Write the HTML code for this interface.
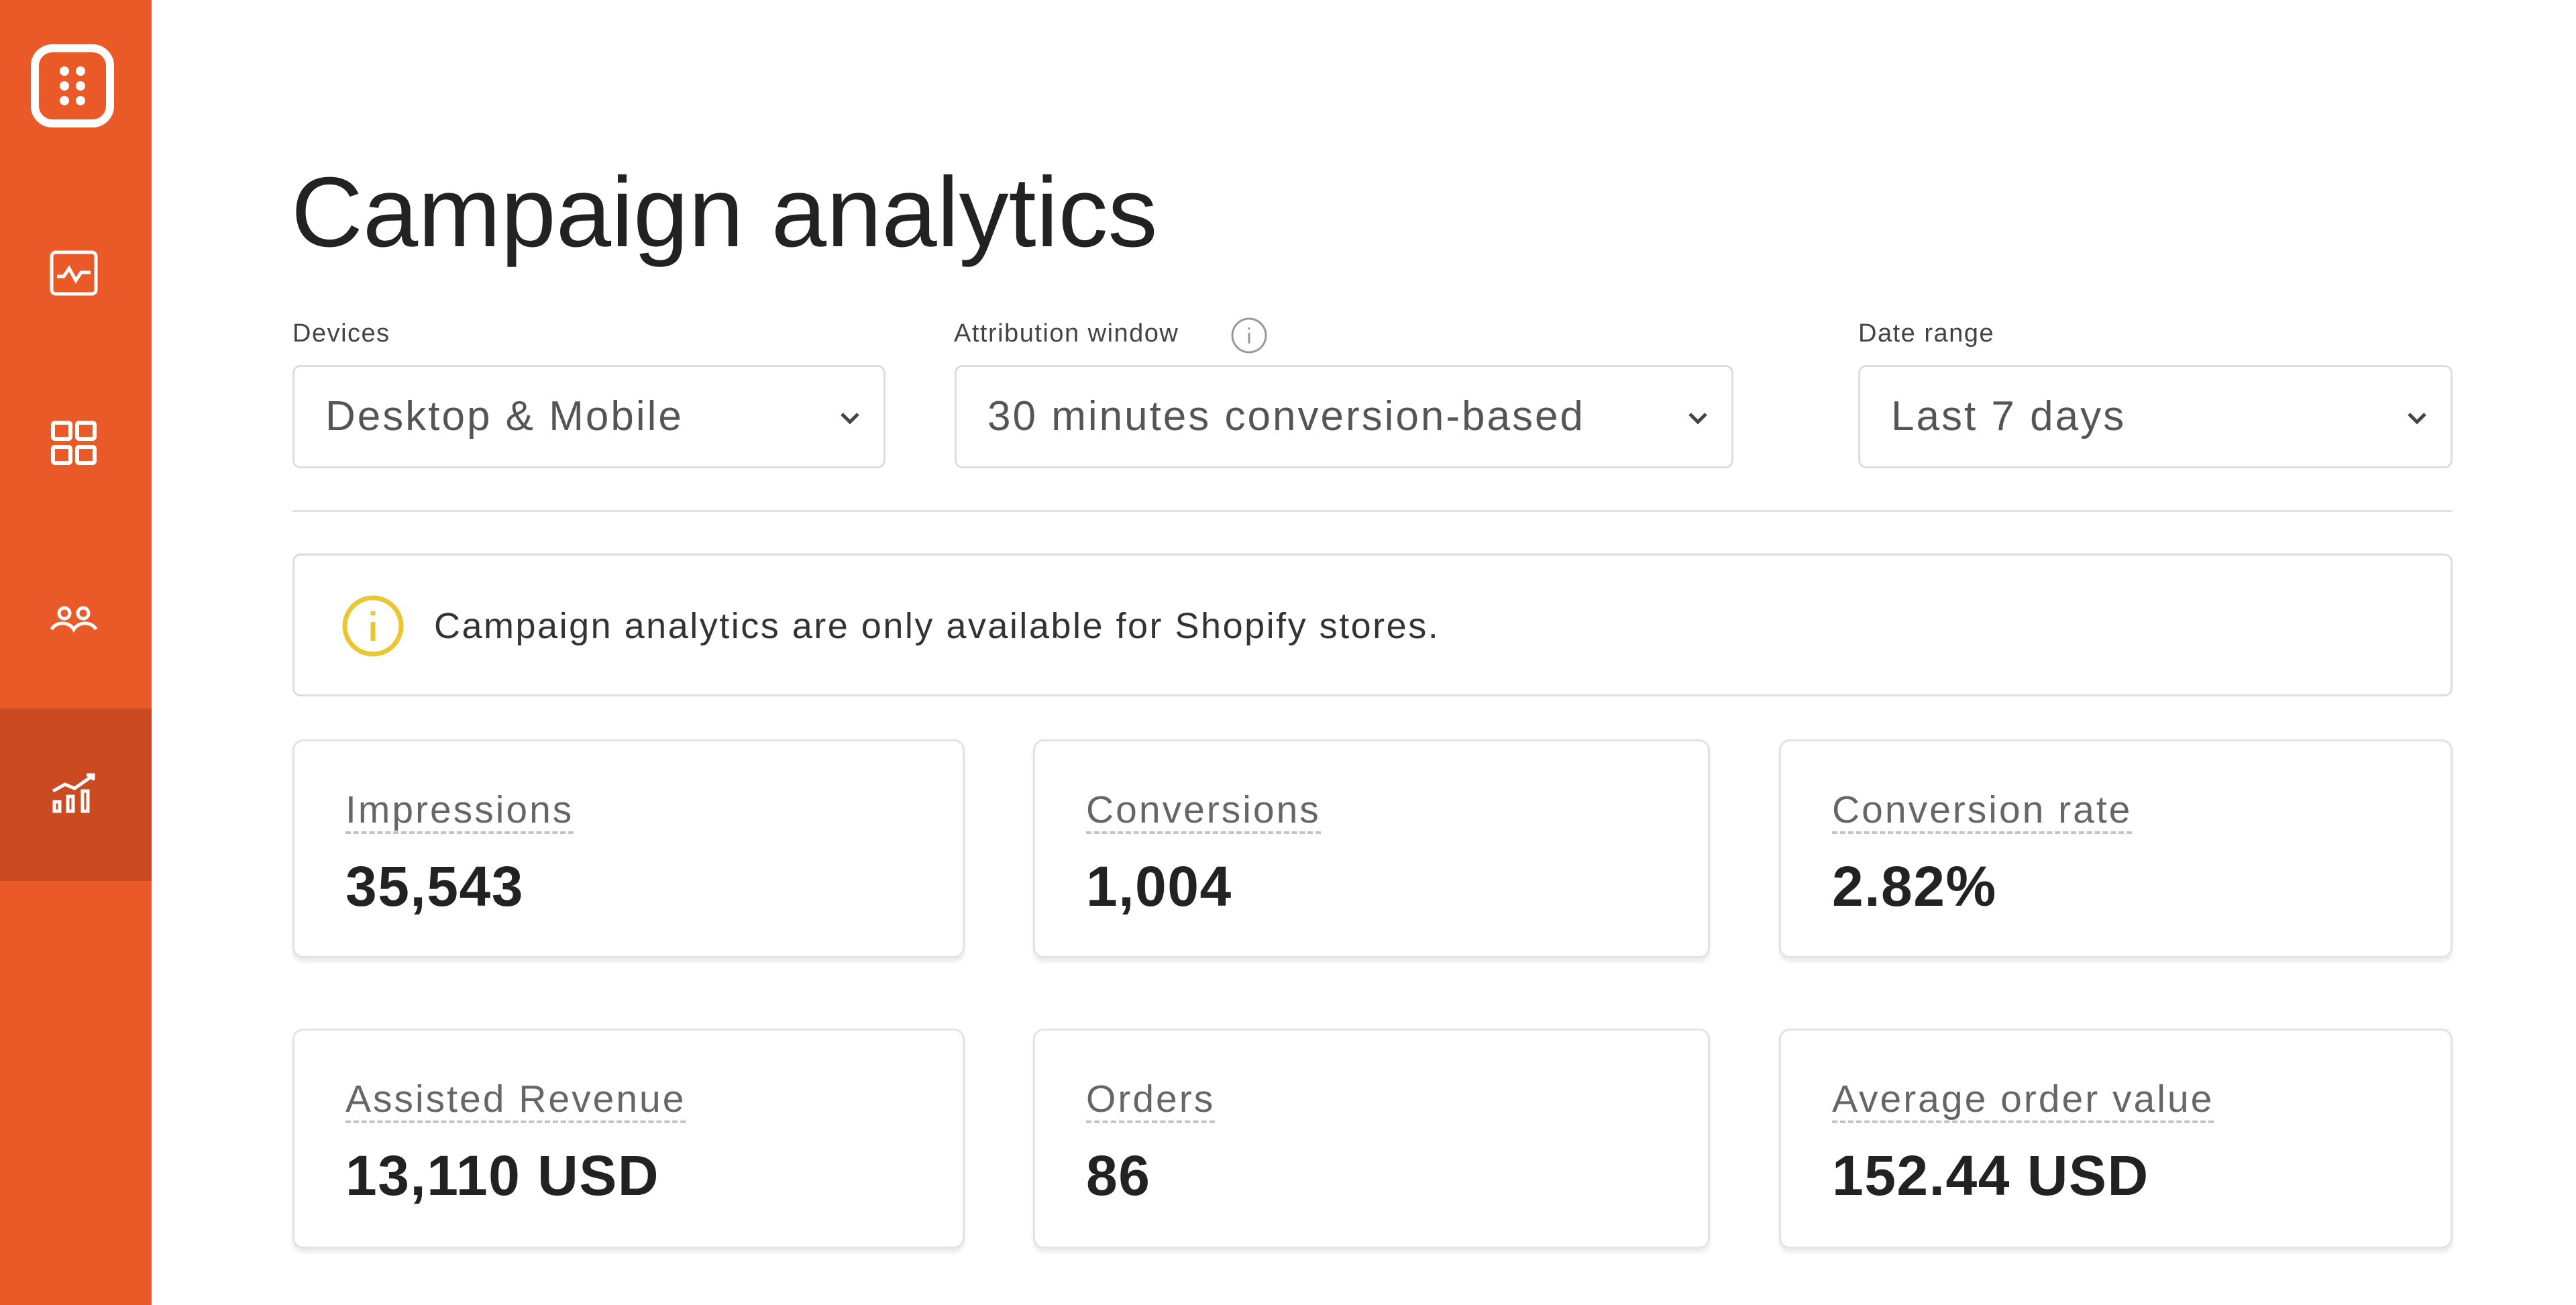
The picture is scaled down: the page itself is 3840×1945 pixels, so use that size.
<!DOCTYPE html>
<html><head><meta charset="utf-8"><style>
*{margin:0;padding:0;box-sizing:border-box}
body{width:3840px;height:1945px;background:#fff;font-family:"Liberation Sans",sans-serif;position:relative;overflow:hidden;color:#222}
.sb{position:absolute;left:0;top:0;width:226px;height:1945px;background:#EA5A28}
.act{position:absolute;left:0;top:1056px;width:226px;height:257px;background:#CB4A22}
.ic{position:absolute;left:73px;width:74px;height:74px}
.a{position:absolute}
h1{position:absolute;left:434px;top:232px;font-size:148px;font-weight:400;color:#222;letter-spacing:0px}
.lbl{position:absolute;top:476px;font-size:38px;color:#444;letter-spacing:1.5px}
.sel{position:absolute;top:544px;height:154px;border:3px solid #ddd;border-radius:12px;font-size:62px;color:#555;padding-left:46px;line-height:148px;letter-spacing:3px}
.sel svg{position:absolute;right:30px;top:56px}
.card{position:absolute;border:3px solid #e3e3e3;border-radius:16px;box-shadow:0 6px 6px rgba(0,0,0,.08);background:#fff}
.card .t{position:absolute;left:76px;top:70px;font-size:57px;color:#666;border-bottom:4px dashed #c4c4c4;line-height:64px;letter-spacing:3px}
.card .v{position:absolute;left:76px;top:168px;font-size:84px;font-weight:700;color:#222;letter-spacing:1.5px}
</style></head><body>
<div class="sb"></div><div class="act"></div>
<svg class="a" style="left:44px;top:64px" width="128" height="128" viewBox="0 0 128 128"><rect x="8" y="8" width="112" height="112" rx="26" fill="none" stroke="#fff" stroke-width="12"/><g fill="#fff"><circle cx="52" cy="42" r="7"/><circle cx="76" cy="42" r="7"/><circle cx="52" cy="64" r="7"/><circle cx="76" cy="64" r="7"/><circle cx="52" cy="86" r="7"/><circle cx="76" cy="86" r="7"/></g></svg>
<svg class="ic" style="top:370px" viewBox="0 0 74 74" fill="none" stroke="#fff" stroke-width="5"><rect x="4" y="6" width="66" height="62" rx="6"/><path d="M12 42h10l8-12 10 18 8-12h14"/></svg>
<svg class="ic" style="top:624px" viewBox="0 0 74 74" fill="none" stroke="#fff" stroke-width="6"><rect x="6" y="6" width="26" height="24" rx="3"/><rect x="42" y="6" width="26" height="24" rx="3"/><rect x="6" y="42" width="26" height="24" rx="3"/><rect x="42" y="42" width="26" height="24" rx="3"/></svg>
<svg class="ic" style="top:886px" viewBox="0 0 74 74" fill="none" stroke="#fff" stroke-width="5"><circle cx="23" cy="28" r="8"/><circle cx="51" cy="28" r="8"/><path d="M4 52c6-12 26-12 33 0c7-12 27-12 33 0"/></svg>
<svg class="ic" style="top:1143px" viewBox="0 0 74 74" fill="none" stroke="#fff" stroke-width="5"><path d="M6 36l18-10 14 6 26-18M56 12h10v8"/><rect x="8" y="52" width="8" height="14"/><rect x="28" y="44" width="8" height="22"/><rect x="50" y="36" width="8" height="30"/></svg>
<h1>Campaign analytics</h1>
<div class="lbl" style="left:436px">Devices</div>
<div class="lbl" style="left:1422px">Attribution window</div>
<svg class="a" style="left:1834px;top:472px" width="56" height="56" viewBox="0 0 56 56" fill="none" stroke="#999" stroke-width="3"><circle cx="28" cy="28" r="25"/><path d="M28 24v16M28 16v3"/></svg>
<div class="lbl" style="left:2770px">Date range</div>
<div class="sel" style="left:436px;width:884px">Desktop &amp; Mobile<svg width="40" height="40" viewBox="0 0 40 40" fill="none" stroke="#444" stroke-width="5"><path d="M8 14l12 12 12-12"/></svg></div>
<div class="sel" style="left:1423px;width:1161px">30 minutes conversion-based<svg width="40" height="40" viewBox="0 0 40 40" fill="none" stroke="#444" stroke-width="5"><path d="M8 14l12 12 12-12"/></svg></div>
<div class="sel" style="left:2770px;width:886px">Last 7 days<svg width="40" height="40" viewBox="0 0 40 40" fill="none" stroke="#444" stroke-width="5"><path d="M8 14l12 12 12-12"/></svg></div>
<div class="a" style="left:436px;top:760px;width:3220px;height:3px;background:#e2e2e2"></div>
<div class="a" style="left:436px;top:825px;width:3220px;height:213px;border:3px solid #ddd;border-radius:12px"></div>
<svg class="a" style="left:508px;top:885px" width="96" height="96" viewBox="0 0 96 96" fill="none" stroke="#EBC631" stroke-width="7"><circle cx="48" cy="48" r="42"/><path d="M48 42v28M48 26v6"/></svg>
<div class="a" style="left:647px;top:902px;font-size:54px;color:#333;letter-spacing:2.5px">Campaign analytics are only available for Shopify stores.</div>
<div class="card" style="left:436px;top:1102px;width:1002px;height:326px"><div class="t">Impressions</div><div class="v">35,543</div></div>
<div class="card" style="left:1540px;top:1102px;width:1009px;height:326px"><div class="t">Conversions</div><div class="v">1,004</div></div>
<div class="card" style="left:2652px;top:1102px;width:1004px;height:326px"><div class="t">Conversion rate</div><div class="v">2.82%</div></div>
<div class="card" style="left:436px;top:1533px;width:1002px;height:328px"><div class="t">Assisted Revenue</div><div class="v">13,110 USD</div></div>
<div class="card" style="left:1540px;top:1533px;width:1009px;height:328px"><div class="t">Orders</div><div class="v">86</div></div>
<div class="card" style="left:2652px;top:1533px;width:1004px;height:328px"><div class="t">Average order value</div><div class="v">152.44 USD</div></div>
</body></html>
